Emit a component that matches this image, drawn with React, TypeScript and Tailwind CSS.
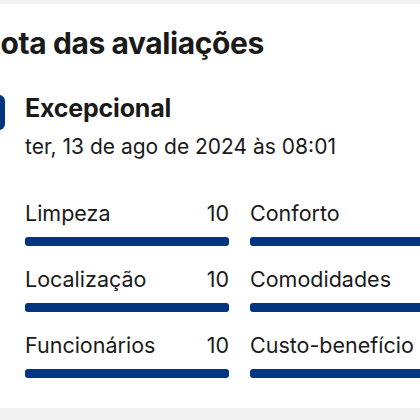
import React from "react";

const rows: [string, string, string, string][] = [
  ["Limpeza", "10", "Conforto", "10"],
  ["Localização", "10", "Comodidades", "10"],
  ["Funcionários", "10", "Custo-benefício", "10"],
];

function Cell({ label, value }: { label: string; value: string }) {
  return (
    <div className="flex flex-col">
      <div className="flex items-baseline justify-between text-[21.5px] leading-[24px] text-[#1a1a1a]">
        <span>{label}</span>
        <span>{value}</span>
      </div>
      <div className="mt-[12px] h-[9px] w-full rounded-[3px] bg-[#003580]" />
    </div>
  );
}

export default function App() {
  return (
    <div
      className="w-[420px] h-[420px] overflow-hidden bg-white flex flex-col"
      style={{ fontFamily: "Inter, 'Noto Sans', sans-serif" }}
    >
      <div className="h-[4px] shrink-0 bg-[#f2f2f2]" />
      <div className="flex-1 flex flex-col">
        <h1 className="ml-[-22px] mt-[21px] text-[30px] leading-[36px] font-bold text-[#1a1a1a] whitespace-nowrap tracking-[-0.4px]">
          Nota das avaliações
        </h1>
        <div className="mt-[33px] ml-[-31px] flex items-start gap-[20px]">
          <div className="w-[36px] h-[35px] mt-[1px] shrink-0 rounded-[6px] bg-[#003580] text-white flex items-center justify-center font-bold">
            10
          </div>
          <div className="flex flex-col">
            <div className="text-[25px] leading-[28px] font-bold text-[#1a1a1a] whitespace-nowrap tracking-[-0.2px]">
              Excepcional
            </div>
            <div className="mt-[13px] text-[21px] leading-[24px] text-[#1a1a1a] whitespace-nowrap">
              ter, 13 de ago de 2024 às 08:01
            </div>
          </div>
        </div>
        <div className="mt-[42px] ml-[25px] grid grid-cols-[204px_204px] gap-x-[21px] gap-y-[21px] whitespace-nowrap">
          {rows.map(([a, av, b, bv]) => (
            <React.Fragment key={a}>
              <Cell label={a} value={av} />
              <Cell label={b} value={bv} />
            </React.Fragment>
          ))}
        </div>
      </div>
      <div className="h-[12px] shrink-0 bg-[#f2f2f2]" />
    </div>
  );
}
